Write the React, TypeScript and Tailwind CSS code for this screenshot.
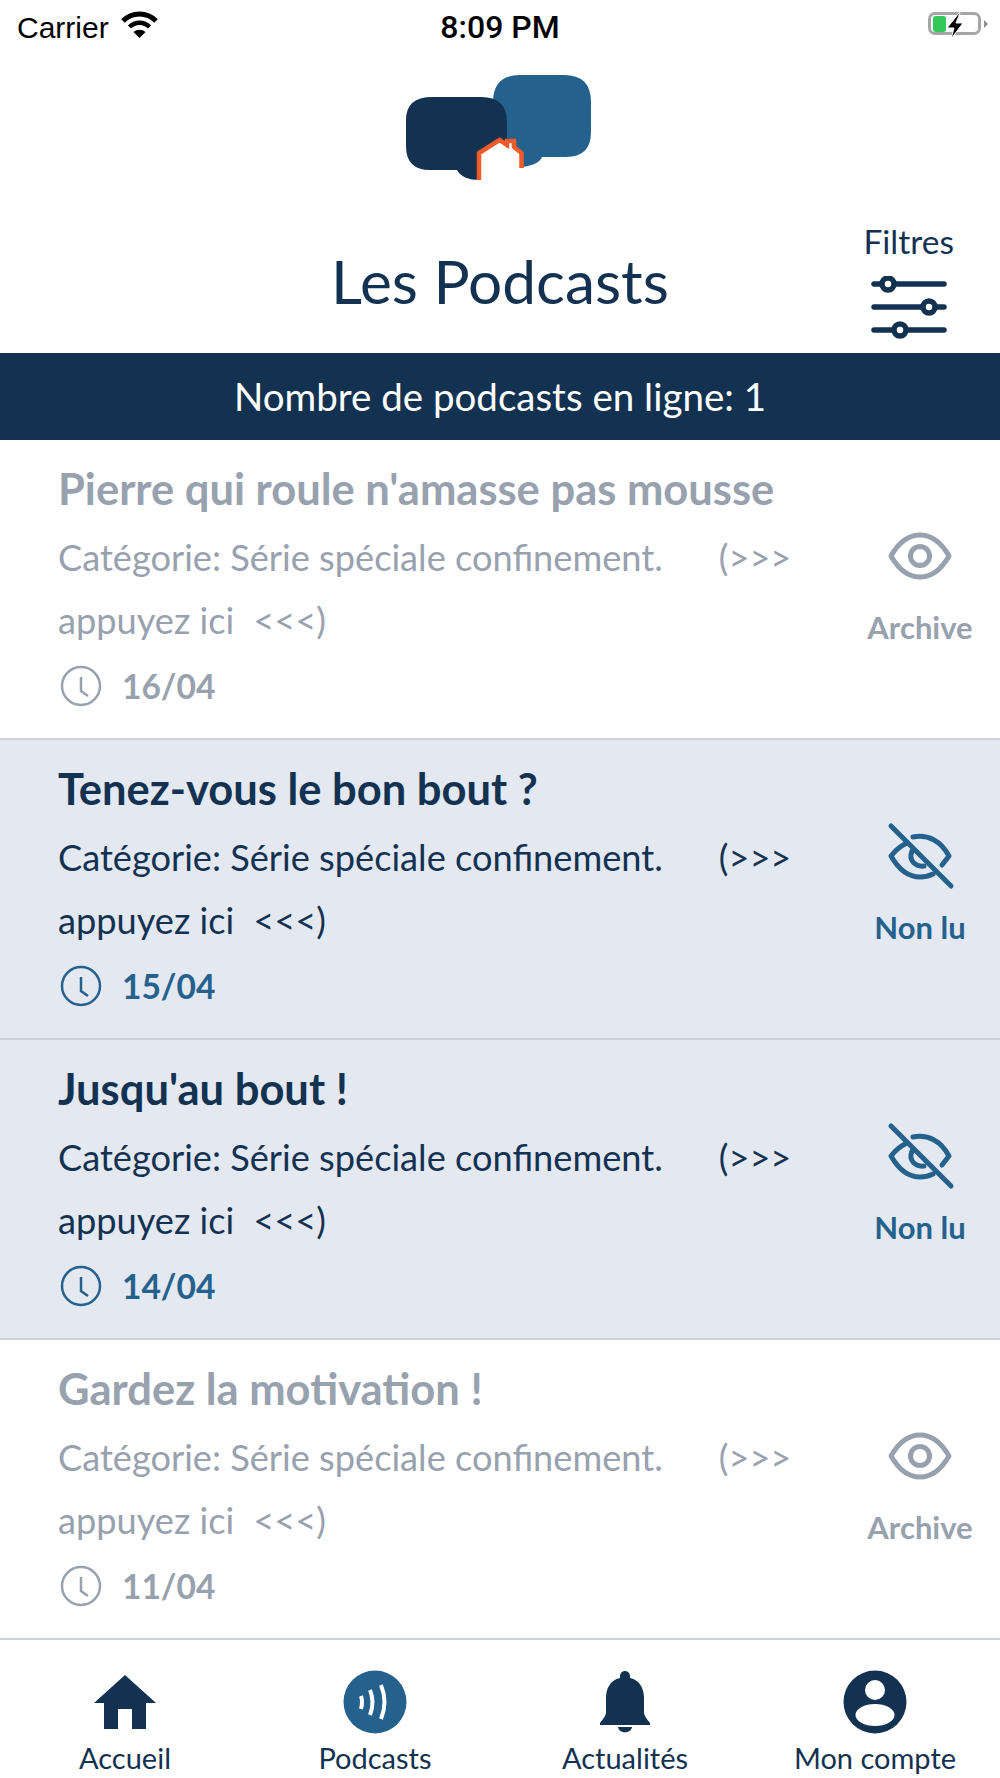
import { Fragment } from "react";

const podcasts = [
  { title: "Pierre qui roule n'amasse pas mousse", date: "16/04", read: true },
  { title: "Tenez-vous le bon bout ?", date: "15/04", read: false },
  { title: "Jusqu'au bout !", date: "14/04", read: false },
  { title: "Gardez la motivation !", date: "11/04", read: true },
];

function StatusBar() {
  return (
    <div className="grid h-[50px] grid-cols-3 items-center pt-[3px] text-black">
      <div className="flex items-center pl-[17px] font-['Liberation_Sans',sans-serif] text-[30px]">
        <span>Carrier</span>
        <svg viewBox="0 0 37 27" className="mb-[6px] ml-[12px] h-[27px] w-[37px]">
          <path d="M18.5 27 L12.5 21 A9 9 0 0 1 24.500 21 Z" fill="#000" />
          <path d="M8.500 16 A14 14 0 0 1 28.500 16" fill="none" stroke="#000" strokeWidth="4.500" />
          <path d="M2 10 A23 23 0 0 1 35 10" fill="none" stroke="#000" strokeWidth="5" />
        </svg>
      </div>
      <div className="text-center font-['Roboto',sans-serif] text-[32px] font-medium">8:09 PM</div>
      <div className="flex justify-end pr-[10px]">
        <svg viewBox="0 0 62 28" className="mb-[3px] h-[28px] w-[62px]">
          <rect x="1.5" y="1.500" width="50" height="20" rx="5.500" fill="none" stroke="#a6a6a6" strokeWidth="3" />
          <rect x="5" y="4" width="13" height="16" rx="3" fill="#34c759" />
          <path d="M56 8 L60 12 L56 16 Z" fill="#8e8e8e" />
          <path d="M31 1 L19 16 H26 L23 27 L35 11 H28 L32 1 Z" fill="#000" stroke="#fff" strokeWidth="1" />
        </svg>
      </div>
    </div>
  );
}

function Logo() {
  return (
    <svg viewBox="0 0 240 140" className="h-[140px] w-[240px]">
      <path d="M140 15 H184 Q211 15 211 42 V72 Q211 97 186 97 H162 Q158 107 135 107 H113 V42 Q113 15 140 15 Z" fill="#24618d" />
      <path d="M52 37 H101 Q127 37 127 62 V90 Q127 120 100 120 Q82 120 77 110 H50 Q26 110 26 86 V60 Q26 37 52 37 Z" fill="#133251" />
      <path d="M99 122 V93 L119.500 80 L127 85 V81 H134 V87 L142 93 V108 Q135 110 128 122 Z" fill="#fff" />
      <path d="M99 120 V93 L119.500 80 L127 85 V81 H134 V87 L141.500 93 V108" fill="none" stroke="#f15a2b" strokeWidth="4.500" />
    </svg>
  );
}

function Sliders() {
  return (
    <svg viewBox="0 0 76 66" className="h-[66px] w-[76px]" fill="none">
      {[
        [3, 17],
        [26, 58],
        [49, 29],
      ].map(([y, x]) => (
        <Fragment key={y}>
          <path d={`M3 ${y + 5}H73`} stroke="#133251" strokeWidth="5.500" strokeLinecap="round" />
          <circle cx={x} cy={y + 5} r="6" fill="#fff" stroke="#133251" strokeWidth="5.500" />
        </Fragment>
      ))}
    </svg>
  );
}

function Eye({ className }: { className: string }) {
  return (
    <svg viewBox="0 0 80 80" className={`h-[80px] w-[80px] ${className}`} fill="none" stroke="currentColor" strokeWidth="5" strokeLinecap="round" strokeLinejoin="round">
      <path d="M11 39 C19 25 29 18 40 18 C51 18 61 25 69 39 C61 53 51 60 40 60 C29 60 19 53 11 39 Z" />
      <circle cx="40" cy="39" r="9.500" />
    </svg>
  );
}

function EyeOff({ className }: { className: string }) {
  return (
    <svg viewBox="0 0 80 80" className={`h-[80px] w-[80px] ${className}`} fill="none" stroke="currentColor" strokeWidth="5" strokeLinecap="round" strokeLinejoin="round">
      <path d="M11 9 L71 69" />
      <path d="M33 20 C48 17 61 24 69 39 L62 48" />
      <path d="M25 27 C19 30 15 34 11 39 C19 53 29 60 40 60 C45 60 49 59 53 57" />
      <path d="M32 34 C28 44 36 50 44 49" />
    </svg>
  );
}

function Clock({ color }: { color: string }) {
  return (
    <svg viewBox="0 0 42 42" className={`ml-[2px] h-[42px] w-[42px] ${color}`} fill="none" stroke="currentColor">
      <circle cx="21" cy="21" r="19" strokeWidth="2.500" />
      <path d="M21 12 V26 L28 31" strokeWidth="2.500" />
    </svg>
  );
}

function PodcastRow({ title, date, read }: { title: string; date: string; read: boolean }) {
  const text = read ? "text-[#98a1ae]" : "text-[#133251]";
  const accent = read ? "text-[#98a1ae]" : "text-[#24618d]";
  return (
    <div className={`flex h-[300px] border-b-2 border-[#cdd0d6] ${read ? "bg-white" : "bg-[#e4e8f1]"}`}>
      <div className="flex-1 pl-[58px] pt-[23px]">
        <h2 className={`text-[43.500px] leading-[50px] font-bold whitespace-nowrap ${text}`}>{title}</h2>
        <div className={`mt-[13px] text-[36.200px] leading-[63px] whitespace-nowrap ${text}`}>
          <div className="flex">
            <span>Catégorie: Série spéciale confinement.</span>
            <span className="ml-[56px]">(&gt;&gt;&gt;</span>
          </div>
          <div className="flex">
            <span>appuyez ici</span>
            <span className="ml-[19px]">&lt;&lt;&lt;)</span>
          </div>
        </div>
        <div className="mt-[13px] flex items-center gap-[20px]">
          <Clock color={accent} />
          <span className={`text-[33.500px] leading-[42px] font-bold ${accent}`}>{date}</span>
        </div>
      </div>
      <div className={`flex w-[160px] shrink-0 flex-col items-center pt-[77px] ${accent}`}>
        {read ? <Eye className="" /> : <EyeOff className="" />}
        <span className="mt-[12px] text-[31px] leading-[36px] font-bold">{read ? "Archive" : "Non lu"}</span>
      </div>
    </div>
  );
}

function TabBar() {
  const tabs = [
    {
      label: "Accueil",
      icon: (
        <svg viewBox="0 0 64 64" className="h-[64px] w-[64px]">
          <path d="M32 5 L63 33 H53 V59 H39 V39 H25 V59 H11 V33 H1 Z" fill="#133251" />
        </svg>
      ),
    },
    {
      label: "Podcasts",
      icon: (
        <svg viewBox="0 0 64 64" className="h-[64px] w-[64px]">
          <circle cx="32" cy="32" r="31.500" fill="#24618d" />
          <g fill="none" stroke="#fff" strokeWidth="4">
            <path d="M18 26 Q20 32 18 39" />
            <path d="M27 20 Q32 32 27 45" />
            <path d="M38 15 Q45 32 38 49" />
          </g>
        </svg>
      ),
    },
    {
      label: "Actualités",
      icon: (
        <svg viewBox="0 0 64 64" className="h-[64px] w-[64px]">
          <path d="M32 1 A5 5 0 0 1 37 6 V8 C47 10 51 19 51 28 V42 C51 46 54 49 57 53 V55 H7 V53 C10 49 13 46 13 42 V28 C13 19 17 10 27 8 V6 A5 5 0 0 1 32 1 Z" fill="#133251" />
          <path d="M25 57 H39 C38 64 26 64 25 57 Z" fill="#133251" />
        </svg>
      ),
    },
    {
      label: "Mon compte",
      icon: (
        <svg viewBox="0 0 64 64" className="h-[64px] w-[64px]">
          <circle cx="32" cy="32" r="31.500" fill="#133251" />
          <circle cx="32" cy="20" r="10" fill="#fff" />
          <ellipse cx="32" cy="45" rx="19.500" ry="11" fill="#fff" />
        </svg>
      ),
    },
  ];
  return (
    <div className="grid h-[138px] grid-cols-4 pt-[30px]">
      {tabs.map((tab) => (
        <div key={tab.label} className="flex flex-col items-center">
          {tab.icon}
          <span className="mt-[7px] text-[29px] leading-[34px] whitespace-nowrap text-[#133251]">{tab.label}</span>
        </div>
      ))}
    </div>
  );
}

export default function App() {
  return (
    <div className="h-[1778px] w-[1000px] overflow-hidden bg-white font-['Lato',sans-serif]">
      <StatusBar />
      <div className="mt-[10px] flex justify-center">
        <Logo />
      </div>
      <div className="grid h-[153px] grid-cols-[1fr_auto_1fr]">
        <div />
        <h1 className="pt-[45px] text-center text-[60.400px] leading-[72px] text-[#133251]">Les Podcasts</h1>
        <div className="flex justify-end pr-[46px] pt-[23px]">
          <div className="flex flex-col items-center text-[#133251]">
            <span className="text-[33.500px] leading-[36px]">Filtres</span>
            <div className="mt-[17px]">
              <Sliders />
            </div>
          </div>
        </div>
      </div>
      <div className="bg-[#133251] py-[20px] text-center text-[38.500px] leading-[47px] text-white">Nombre de podcasts en ligne: 1</div>
      {podcasts.map((p) => (
        <PodcastRow key={p.date} {...p} />
      ))}
      <TabBar />
    </div>
  );
}
